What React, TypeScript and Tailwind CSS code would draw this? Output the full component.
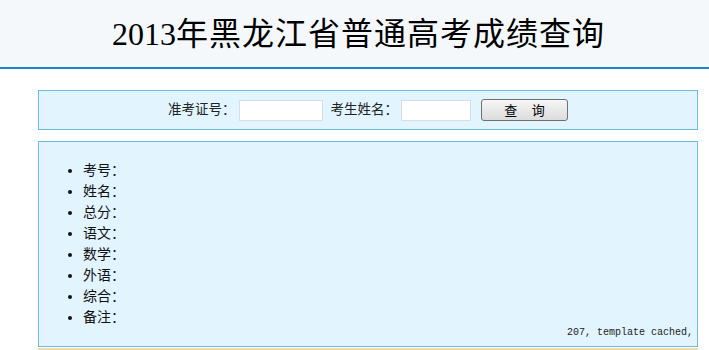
import React from "react";

const items = ["考号：", "姓名：", "总分：", "语文：", "数学：", "外语：", "综合：", "备注："];

export default function App() {
  return (
    <div className="w-[709px] h-[350px] bg-white overflow-hidden" style={{ fontFamily: '"Liberation Sans", "Noto Sans CJK SC", sans-serif' }}>
      <div className="h-[67px] bg-[#f4f8fb] border-b-2 border-[#1b87c5] flex items-center justify-center box-content">
        <h1 className="text-[32px] text-black leading-none mt-[1px] ml-[8px]" style={{ fontFamily: '"Liberation Serif", "Noto Sans CJK SC", serif' }}>
          2013<span className="text-[32px] tracking-[1px]">年黑龙江省普通高考成绩查询</span>
        </h1>
      </div>
      <div className="ml-[38px] w-[660px] mt-[21px] h-[40px] border border-[#6cbbe0] bg-[#e2f4fd] flex items-center justify-center text-[13.5px] text-[#222]">
        <span>准考证号：</span>
        <input className="ml-[3px] w-[84px] h-[21px] bg-white border border-[#d6dde3] outline-none" />
        <span className="ml-[8px]">考生姓名：</span>
        <input className="ml-[3px] w-[70px] h-[21px] bg-white border border-[#d6dde3] outline-none" />
        <button className="ml-[10px] w-[87px] h-[22px] rounded-[3px] border border-[#707070] bg-gradient-to-b from-[#f6f6f6] to-[#dcdcdc] text-[13px] text-black leading-none">
          查&nbsp;&nbsp;&nbsp;&nbsp;询
        </button>
      </div>
      <div className="ml-[38px] w-[660px] mt-[11px] h-[206px] border border-[#6cbbe0] bg-[#e2f4fd] flex flex-col relative">
        <ul className="list-disc pl-[44px] pt-[18px] text-[14px] text-[#111] leading-[21px]">
          {items.map((t) => (
            <li key={t}>{t}</li>
          ))}
        </ul>
        <div className="absolute right-[4px] bottom-[6px] text-[10px] text-[#222]" style={{ fontFamily: '"Liberation Mono", monospace' }}>
          207, template cached,
        </div>
      </div>
      <div className="ml-[38px] w-[660px] mt-[1px] h-[2px] bg-[#f0d9a8]" />
    </div>
  );
}
